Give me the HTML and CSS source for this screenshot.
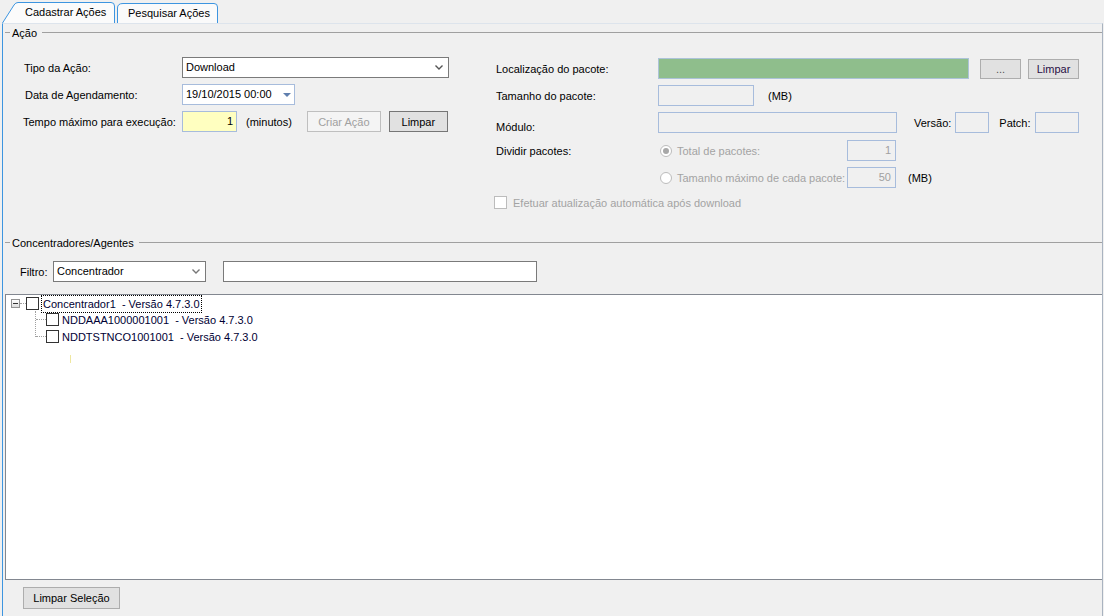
FILE: index.html
```html
<!DOCTYPE html>
<html lang="pt-BR">
<head>
    <meta charset="UTF-8">
    <title>Cadastrar Ações</title>
    <link rel="stylesheet" href="styles.css">
</head>
<body>

    <div class="tabs">
        <div class="tab tab-active">
            <svg class="tab-shape" width="114" height="21" viewBox="0 0 114 21"><path d="M0.5 21 L12 3 Q13.5 0.5 16 0.5 L109 0.5 Q112.5 0.5 112.5 4 L112.5 21" fill="#fbfbfb" stroke="#3d95e0"/></svg>
            <span>Cadastrar Ações</span>
        </div>
        <div class="tab">
            <svg class="tab-shape" width="102" height="20" viewBox="0 0 102 20"><path d="M0.5 20 L0.5 5 Q0.5 0.5 6 0.5 L97 0.5 Q100.5 0.5 100.5 4 L100.5 20" fill="#fafafa" stroke="#3d95e0"/></svg>
            <span>Pesquisar Ações</span>
        </div>
    </div>

    <div class="panel">
        <div class="legend"><span>Ação</span></div>

        <div class="acao">
            <div class="col-left">
                <div class="row">
                    <label class="lbl-left">Tipo da Ação:</label>
                    <div class="select select-tipo">Download
                        <svg class="chev" width="8" height="5" viewBox="0 0 8 5"><path d="M0.5 0.5 L4 4 L7.5 0.5" fill="none" stroke="#555" stroke-width="1.4"/></svg>
                    </div>
                </div>
                <div class="row">
                    <label class="lbl-left lbl-data">Data de Agendamento:</label>
                    <div class="datepicker">19/10/2015 00:00
                        <svg class="tri" width="8" height="4" viewBox="0 0 8 4"><path d="M0 0 L8 0 L4 4 Z" fill="#5f7fae"/></svg>
                    </div>
                </div>
                <div class="row">
                    <label class="lbl-left lbl-tempo">Tempo máximo para execução:</label>
                    <div class="input input-yellow">1</div>
                    <span class="unit">(minutos)</span>
                    <button class="btn btn-disabled btn-criar">Criar Ação</button>
                    <button class="btn btn-limpar">Limpar</button>
                </div>
            </div>

            <div class="col-right">
                <div class="row">
                    <label class="lbl-right">Localização do pacote:</label>
                    <div class="input input-green"></div>
                    <button class="btn btn-dots">...</button>
                    <button class="btn btn-limpar2">Limpar</button>
                </div>
                <div class="row">
                    <label class="lbl-right">Tamanho do pacote:</label>
                    <div class="input input-off w-tamanho"></div>
                    <span class="unit unit-mb">(MB)</span>
                </div>
                <div class="row">
                    <label class="lbl-right lbl-modulo">Módulo:</label>
                    <div class="input input-off w-modulo"></div>
                    <span class="lbl-versao">Versão:</span>
                    <div class="input input-off w-versao"></div>
                    <span class="lbl-patch">Patch:</span>
                    <div class="input input-off w-patch"></div>
                </div>
                <div class="row row-dividir">
                    <label class="lbl-right">Dividir pacotes:</label>
                    <span class="radio radio-on"></span>
                    <span class="off-text opt-text">Total de pacotes:</span>
                    <div class="input input-off input-num">1</div>
                </div>
                <div class="row row-tamanho">
                    <span class="lbl-right"></span>
                    <span class="radio"></span>
                    <span class="off-text opt-text">Tamanho máximo de cada pacote:</span>
                    <div class="input input-off input-num">50</div>
                    <span class="unit unit-mb2">(MB)</span>
                </div>
                <div class="row row-check">
                    <span class="check check-off"></span>
                    <span class="off-text">Efetuar atualização automática após download</span>
                </div>
            </div>
        </div>

        <div class="legend legend-agentes"><span>Concentradores/Agentes</span></div>

        <div class="filtro">
            <label>Filtro:</label>
            <div class="select select-filtro">Concentrador
                <svg class="chev" width="8" height="5" viewBox="0 0 8 5"><path d="M0.5 0.5 L4 4 L7.5 0.5" fill="none" stroke="#777" stroke-width="1.4"/></svg>
            </div>
            <div class="input input-busca"></div>
        </div>

        <div class="tree">
            <div class="node node-root">
                <span class="expander"><span class="minus"></span></span>
                <span class="dots-h"></span>
                <span class="check"></span>
                <span class="node-text node-focus">Concentrador1&nbsp; - Versão 4.7.3.0</span>
            </div>
            <div class="children">
                <div class="node node-child">
                    <span class="dots-h dots-child"></span>
                    <span class="check"></span>
                    <span class="node-text">NDDAAA1000001001&nbsp; - Versão 4.7.3.0</span>
                </div>
                <div class="node node-child">
                    <span class="dots-h dots-child"></span>
                    <span class="check"></span>
                    <span class="node-text">NDDTSTNCO1001001&nbsp; - Versão 4.7.3.0</span>
                </div>
            </div>
            <div class="caret"></div>
        </div>

        <div class="footer">
            <button class="btn btn-selecao">Limpar Seleção</button>
        </div>
    </div>

</body>
</html>
```

FILE: styles.css
```css
* { margin: 0; padding: 0; box-sizing: border-box; }

body {
    font-family: "Liberation Sans", Arial, sans-serif;
    font-size: 11px;
    color: #000;
    background-color: #f0f0f0;
    width: 1104px;
    height: 616px;
    overflow: hidden;
}

/* Tabs */
.tabs {
    height: 23px;
    display: flex;
    align-items: flex-end;
    padding-left: 2px;
}

.tab {
    position: relative;
    height: 20px;
    width: 102px;
    margin-left: 1px;
}

.tab-active {
    height: 21px;
    width: 114px;
    margin-left: 0;
    z-index: 2;
}

.tab-shape {
    position: absolute;
    left: 0;
    top: 0;
}

.tab span {
    position: relative;
    display: block;
    line-height: 20px;
    padding-left: 11px;
    font-size: 11px;
}

.tab-active span {
    padding-left: 23px;
    line-height: 21px;
}

/* Panel */
.panel {
    height: 593px;
    margin-left: 2px;
    margin-right: 1px;
    border-left: 1px solid #3d95e0;
    border-right: 1px solid #a9b3c0;
    border-top: 1px solid #dde4ec;
    display: flex;
    flex-direction: column;
}

.legend {
    display: flex;
    align-items: center;
    height: 17px;
    margin: 0 0 0 2px;
}

.legend::before {
    content: "";
    width: 5px;
    border-top: 1px solid #a0a0a0;
}

.legend::after {
    content: "";
    flex: 1;
    border-top: 1px solid #a0a0a0;
    margin-left: 5px;
}

.legend span {
    padding-left: 2px;
}

/* Ação section */
.acao {
    display: flex;
    height: 193px;
}

.row {
    display: flex;
    align-items: center;
    height: 21px;
    margin-bottom: 6px;
}

.col-left {
    width: 493px;
    padding-top: 16px;
    padding-left: 20px;
}

.lbl-left {
    width: 159px;
    padding-left: 1px;
}

.lbl-data { padding-left: 2px; }
.lbl-tempo { padding-left: 0; }

.select {
    position: relative;
    height: 21px;
    background: #fff;
    border: 1px solid #7a7a7a;
    padding-left: 3px;
    line-height: 19px;
}

.select-tipo { width: 267px; }

.chev {
    position: absolute;
    right: 5px;
    top: 7px;
}

.datepicker {
    position: relative;
    width: 113px;
    height: 21px;
    background: #fff;
    border: 1px solid #a7bcdc;
    padding-left: 3px;
    line-height: 19px;
}

.tri {
    position: absolute;
    right: 3px;
    top: 8px;
}

.input {
    height: 21px;
    border: 1px solid #a7bcdc;
    line-height: 19px;
}

.input-yellow {
    width: 55px;
    background: #ffffc0;
    text-align: right;
    padding-right: 3px;
}

.unit {
    margin-left: 9px;
}

.btn {
    height: 21px;
    font-family: "Liberation Sans", Arial, sans-serif;
    font-size: 11px;
    background: #e1e1e1;
    border: 1px solid #adadad;
    color: #000;
}

.btn-disabled {
    background: #f4f4f4;
    border-color: #bfbfbf;
    color: #a0a0a0;
}

.btn-criar {
    width: 74px;
    margin-left: 15px;
}

.btn-limpar {
    width: 59px;
    margin-left: 8px;
    background: #e1e1e1;
    border-color: #767676;
}

.col-right {
    flex: 1;
    padding-top: 17px;
}

.lbl-right {
    width: 162px;
}

.input-green {
    width: 311px;
    height: 21px;
    background: #8fbe8c;
    border-color: #acc3d8;
}

.btn-dots {
    width: 41px;
    height: 20px;
    margin-left: 11px;
    color: #555;
}

.btn-limpar2 {
    width: 51px;
    height: 20px;
    margin-left: 7px;
    color: #2a0f45;
}

.input-off {
    background: #f0f0f0;
}

.w-tamanho { width: 96px; }

.unit-mb { margin-left: 14px; }

.lbl-modulo { padding-top: 9px; height: 21px; }

.w-modulo { width: 239px; }

.lbl-versao { margin-left: 17px; }
.w-versao { width: 34px; margin-left: 4px; }
.lbl-patch { margin-left: 10px; }
.w-patch { width: 44px; margin-left: 4px; }

.row-dividir {
    margin-top: 7px;
}

.radio {
    width: 12px;
    height: 12px;
    border-radius: 50%;
    border: 1px solid #bcbcbc;
    background: #fff;
    margin-left: 2px;
    display: flex;
    align-items: center;
    justify-content: center;
}

.radio-on::after {
    content: "";
    width: 6px;
    height: 6px;
    border-radius: 50%;
    background: #a8a8a8;
}

.off-text {
    color: #a3a3a3;
}

.opt-text {
    width: 170px;
    margin-left: 5px;
}

.input-num {
    width: 49px;
    text-align: right;
    padding-right: 4px;
    color: #a0a0a0;
}

.unit-mb2 { margin-left: 12px; }

.row-check {
    margin-top: -2px;
    margin-left: -2px;
}

.check {
    width: 13px;
    height: 13px;
    border: 1px solid #333;
    background: #fff;
    flex-shrink: 0;
}

.check-off {
    border-color: #bcbcbc;
    margin-right: 6px;
}

/* Concentradores */
.filtro {
    display: flex;
    align-items: center;
    height: 21px;
    margin-top: 10px;
    padding-left: 17px;
}

.filtro label {
    width: 33px;
}

.select-filtro {
    width: 153px;
    line-height: 18px;
}

.input-busca {
    width: 314px;
    margin-left: 17px;
    background: #fff;
    border-color: #7a7a7a;
}

/* Tree */
.tree {
    position: relative;
    margin-top: 12px;
    margin-left: 2px;
    height: 286px;
    background: #fff;
    border-top: 1px solid #828790;
    border-bottom: 1px solid #828790;
    border-left: 1px solid #828790;
    padding-top: 1px;
}

.node {
    display: flex;
    align-items: center;
    height: 17px;
}

.node-root {
    height: 15px;
    padding-left: 5px;
}

.expander {
    width: 9px;
    height: 9px;
    border: 1px solid #929292;
    background: linear-gradient(#fff, #dcdcdc);
    display: flex;
    align-items: center;
    justify-content: center;
}

.minus {
    width: 5px;
    border-top: 1px solid #333;
}

.dots-h {
    width: 6px;
    border-top: 1px dotted #a0a0a0;
}

.node-text {
    margin-left: 3px;
    color: #000033;
    font-size: 11px;
}

.node-focus {
    outline: 1px dotted #000;
    outline-offset: 0;
    padding: 1px;
    margin-left: 3px;
    line-height: 14px;
}

.children {
    margin-left: 29px;
    border-left: 1px dotted #a0a0a0;
    height: 26px;
}

.node-child .dots-h {
    width: 10px;
}

.caret {
    position: absolute;
    left: 64px;
    top: 60px;
    height: 8px;
    border-left: 1px solid #efe7a0;
}

/* Footer */
.footer {
    padding: 7px 0 0 20px;
}

.btn-selecao {
    width: 97px;
    height: 22px;
}
```
